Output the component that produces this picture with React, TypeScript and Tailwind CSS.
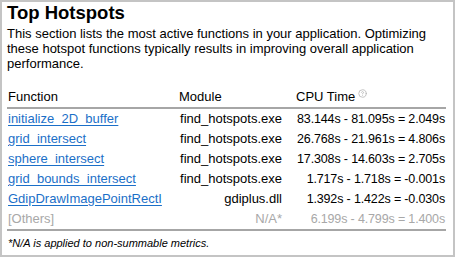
import { CircleHelp } from "lucide-react";

type Row = {
  name: string;
  module: string;
  time: string;
  muted?: boolean;
};

const rows: Row[] = [
  { name: "initialize_2D_buffer", module: "find_hotspots.exe", time: "83.144s - 81.095s = 2.049s" },
  { name: "grid_intersect", module: "find_hotspots.exe", time: "26.768s - 21.961s = 4.806s" },
  { name: "sphere_intersect", module: "find_hotspots.exe", time: "17.308s - 14.603s = 2.705s" },
  { name: "grid_bounds_intersect", module: "find_hotspots.exe", time: "1.717s - 1.718s = -0.001s" },
  { name: "GdipDrawImagePointRectI", module: "gdiplus.dll", time: "1.392s - 1.422s = -0.030s" },
  { name: "[Others]", module: "N/A*", time: "6.199s - 4.799s = 1.400s", muted: true },
];

const App = () => {
  return (
    <div className="w-[455px] h-[257px] bg-white border-2 border-[#c4c4c4] pl-[5px] pr-[7px] text-black font-['Liberation_Sans',Arial,sans-serif] overflow-hidden">
      <h1 className="text-[18.5px] leading-[22px] font-bold">Top Hotspots</h1>
      <p className="mt-[2px] text-[13px] leading-[15px]">
        This section lists the most active functions in your application. Optimizing these hotspot functions typically results in improving overall application performance.
      </p>

      <div className="mt-[17px] text-[13px]">
        <div className="grid grid-cols-[166px_110px_1fr] border-b-2 border-[#a6a6a6] leading-[18px] pb-[1px]">
          <div className="pl-[1px]">Function</div>
          <div className="pl-[6px]">Module</div>
          <div className="pl-[13px] flex items-start gap-[3px]">
            CPU Time
            <CircleHelp className="w-[9px] h-[9px] mt-[1px] text-[#b0b0b0]" strokeWidth={2} />
          </div>
        </div>

        <div className="border-b-2 border-[#a6a6a6]">
          {rows.map((row) => (
            <div
              key={row.name}
              className={`grid grid-cols-[166px_110px_1fr] h-[20px] leading-[20px] ${row.muted ? "text-[#a8a8a8]" : ""}`}
            >
              <div className="pl-[1px]">
                {row.muted ? (
                  row.name
                ) : (
                  <a href="#" className="text-[#1b6fc8] underline underline-offset-[2px]">
                    {row.name}
                  </a>
                )}
              </div>
              <div className="text-right pr-[1px]">{row.module}</div>
              <div className="text-right pr-[1px] text-[12.5px] tracking-[-0.15px]">{row.time}</div>
            </div>
          ))}
        </div>

        <p className="pl-[1px] mt-[5px] text-[11px] italic leading-[14px]">*N/A is applied to non-summable metrics.</p>
      </div>
    </div>
  );
};

export default App;
